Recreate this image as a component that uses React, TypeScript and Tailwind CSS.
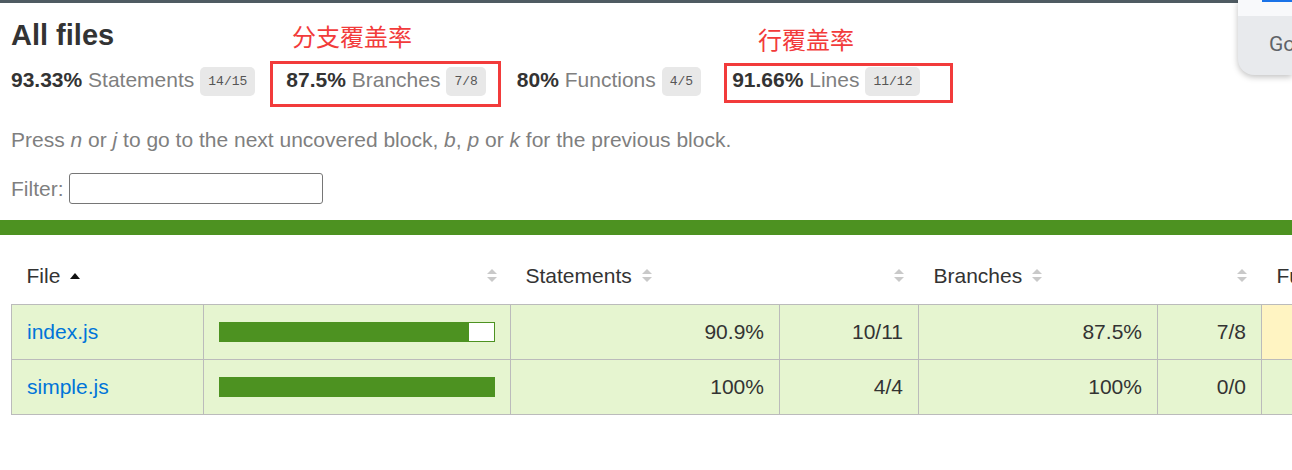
type Stat = {
  pct: string
  label: string
  fraction: string
}

type Row = {
  file: string
  cells: { pct: number; abs: string }[]
}

const stats: Stat[] = [
  { pct: '93.33%', label: 'Statements', fraction: '14/15' },
  { pct: '87.5%', label: 'Branches', fraction: '7/8' },
  { pct: '80%', label: 'Functions', fraction: '4/5' },
  { pct: '91.66%', label: 'Lines', fraction: '11/12' },
]

const rows: Row[] = [
  {
    file: 'index.js',
    cells: [
      { pct: 90.9, abs: '10/11' },
      { pct: 87.5, abs: '7/8' },
      { pct: 75, abs: '3/4' },
      { pct: 90.9, abs: '10/11' },
    ],
  },
  {
    file: 'simple.js',
    cells: [
      { pct: 100, abs: '4/4' },
      { pct: 100, abs: '0/0' },
      { pct: 100, abs: '1/1' },
      { pct: 100, abs: '1/1' },
    ],
  },
]

const headers = ['Statements', 'Branches', 'Functions', 'Lines']

function SortIcon() {
  return (
    <svg width="12" height="15" viewBox="0 0 12 15" className="inline-block shrink-0">
      <polygon points="1,6 6,1 11,6" fill="#c9c9c9" />
      <polygon points="1,9 6,14 11,9" fill="#c9c9c9" />
    </svg>
  )
}

function SortAsc() {
  return (
    <svg width="10" height="6" viewBox="0 0 10 6" className="inline-block">
      <polygon points="0,6 5,0 10,6" fill="#111" />
    </svg>
  )
}

// coverage level colours, istanbul style
function cellBg(pct: number) {
  if (pct >= 80) return 'bg-[#e6f5d0]'
  if (pct >= 50) return 'bg-[#fff4c2]'
  return 'bg-[#fce1e5]'
}

export default function App() {
  return (
    <div className="relative w-full h-[470px] overflow-hidden bg-white font-['Liberation_Sans',Arial,sans-serif] text-[#333]">
      <div className="h-[3px] bg-[#4f5b62]" />

      <div className="px-[11px]">
        <h1 className="mt-[14px] text-[29px] leading-[36px] font-bold">All files</h1>

        <div className="mt-[14px] flex h-[29px] items-start">
          {stats.map((s) => (
            <div key={s.label} className="mr-[31px] flex items-start">
              <span className="text-[21px] leading-[25px] whitespace-pre">
                <b className="font-bold">{s.pct}</b>
                <span className="text-[#7f7f7f]"> {s.label}</span>
              </span>
              <span className="ml-[6px] flex h-[29px] items-center rounded-[5px] bg-[#e8e8e8] px-[8px] font-['Liberation_Mono',monospace] text-[13px] text-[#555]">
                {s.fraction}
              </span>
            </div>
          ))}
        </div>

        <p className="mt-[31px] text-[21px] leading-[25px] text-[#7f7f7f]">
          Press <i>n</i> or <i>j</i> to go to the next uncovered block, <i>b</i>, <i>p</i> or{' '}
          <i>k</i> for the previous block.
        </p>

        <div className="mt-[21px] flex h-[31px] items-center">
          <span className="text-[21px] leading-[25px] text-[#7f7f7f]">Filter:</span>
          <input className="ml-[5px] h-[31px] w-[254px] rounded-[3px] border border-[#767676] bg-white outline-none" />
        </div>
      </div>

      <div className="mt-[16px] h-[15px] bg-[#4d9221]" />

      <div className="px-[11px] pt-[13px]">
        <table className="w-[1700px] table-fixed border-collapse text-[21px]">
          <colgroup>
            <col className="w-[192px]" />
            <col className="w-[307px]" />
            <col className="w-[269px]" />
            <col className="w-[139px]" />
            <col className="w-[239px]" />
            <col className="w-[104px]" />
            <col className="w-[239px]" />
            <col className="w-[104px]" />
            <col className="w-[239px]" />
            <col className="w-[104px]" />
          </colgroup>
          <thead>
            <tr className="h-[56px]">
              <th className="px-[15px] text-left font-normal">
                <span className="inline-flex items-center">
                  File
                  <span className="ml-[10px] flex">
                    <SortAsc />
                  </span>
                </span>
              </th>
              <th className="pr-[13px] text-right font-normal">
                <span className="inline-flex">
                  <SortIcon />
                </span>
              </th>
              {headers.map((h) => (
                <>
                  <th key={h} className="px-[15px] text-left font-normal">
                    <span className="inline-flex items-center whitespace-nowrap">
                      {h}
                      <span className="ml-[9px] flex">
                        <SortIcon />
                      </span>
                    </span>
                  </th>
                  <th key={h + '-abs'} className="pr-[14px] text-right font-normal">
                    <span className="inline-flex">
                      <SortIcon />
                    </span>
                  </th>
                </>
              ))}
            </tr>
          </thead>
          <tbody>
            {rows.map((r) => {
              const stmt = r.cells[0].pct
              return (
                <tr key={r.file} className="h-[55px]">
                  <td className={`border border-[#bbb] px-[15px] ${cellBg(stmt)}`}>
                    <a className="text-[#0074d9]">{r.file}</a>
                  </td>
                  <td className={`border border-[#bbb] px-[15px] ${cellBg(stmt)}`}>
                    <div className="flex h-[20px] w-[276px] border border-[#4d9221] bg-white">
                      <div className="h-full bg-[#4d9221]" style={{ width: `${stmt}%` }} />
                    </div>
                  </td>
                  {r.cells.map((c, i) => (
                    <>
                      <td
                        key={'p' + i}
                        className={`border border-[#bbb] px-[15px] text-right ${cellBg(c.pct)}`}
                      >
                        {c.pct}%
                      </td>
                      <td
                        key={'a' + i}
                        className={`border border-[#bbb] px-[15px] text-right ${cellBg(c.pct)}`}
                      >
                        {c.abs}
                      </td>
                    </>
                  ))}
                </tr>
              )
            })}
          </tbody>
        </table>
      </div>

      {/* red annotations drawn over the report */}
      <span className="absolute left-[292px] top-[22px] font-['Noto_Sans_CJK_SC',sans-serif] text-[24px] leading-[28px] text-[#f23b3b]">
        分支覆盖率
      </span>
      <div className="absolute left-[270px] top-[61px] h-[46px] w-[231px] border-[3px] border-[#f23b3b]" />
      <span className="absolute left-[758px] top-[25px] font-['Noto_Sans_CJK_SC',sans-serif] text-[24px] leading-[28px] text-[#f23b3b]">
        行覆盖率
      </span>
      <div className="absolute left-[724px] top-[63px] h-[40px] w-[229px] border-[3px] border-[#f23b3b]" />

      {/* browser sign-in popup peeking in */}
      <div className="absolute right-0 top-0 h-[75px] w-[54px] overflow-hidden rounded-bl-[16px] bg-[#e8eaed] shadow-[0_2px_6px_rgba(0,0,0,0.25)]">
        <div className="relative h-[16px] bg-[#f8f9fb]">
          <div className="absolute left-[24px] right-0 top-0 h-[2px] bg-[#1a73e8]" />
        </div>
        <div className="pl-[31px] pt-[16px] font-['Roboto',sans-serif] text-[21px] leading-[24px] text-[#5f6368]">
          Go
        </div>
      </div>
    </div>
  )
}
